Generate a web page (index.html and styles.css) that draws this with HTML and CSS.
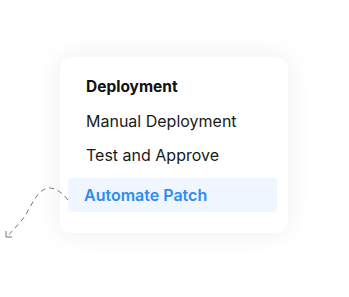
FILE: index.html
```html
<!DOCTYPE html>
<html>
<head>
<meta charset="UTF-8">
<title>Deployment</title>
<link rel="stylesheet" href="styles.css">
</head>
<body>
<div class="stage">
    <svg class="trail" width="80" height="70" viewBox="0 0 80 70">
        <path d="M68 30 C 60 20, 52 16, 45 19 C 35 23, 30 40, 22 50 C 17 56, 12 61, 7 67" fill="none" stroke="#777" stroke-width="1" stroke-dasharray="5 4"/>
        <path d="M6 61 L6 67 L12 67" fill="none" stroke="#777" stroke-width="1"/>
    </svg>
    <div class="menu-card">
        <div class="menu-title">Deployment</div>
        <div class="menu-item">Manual Deployment</div>
        <div class="menu-item">Test and Approve</div>
        <div class="menu-item active">Automate Patch</div>
    </div>
</div>
</body>
</html>
```

FILE: styles.css
```css
body {
    margin: 0;
    padding: 0;
    background-color: #fff;
    font-family: Inter, "Noto Sans", sans-serif;
}
.stage {
    position: relative;
    width: 349px;
    height: 297px;
    overflow: hidden;
    padding-top: 57px;
    box-sizing: border-box;
}
.trail {
    position: absolute;
    left: 0;
    top: 170px;
}
.menu-card {
    margin-left: 60px;
    width: 228px;
    height: 176px;
    box-sizing: border-box;
    background-color: #fff;
    border-radius: 12px;
    box-shadow: 0px 0px 28px rgba(0, 0, 0, 0.07);
    padding: 13px 11px 0 8px;
}
.menu-title {
    font-size: 15.5px;
    font-weight: 700;
    color: #111;
    padding-left: 18px;
    height: 34px;
    line-height: 34px;
}
.menu-item {
    font-size: 16px;
    color: #1a1a1a;
    padding-left: 18px;
    height: 34px;
    line-height: 34px;
}
.menu-item.active {
    margin-top: 6px;
    height: 34px;
    padding-left: 16px;
    background-color: #eff6ff;
    border-radius: 4px;
    color: #2d8cf0;
    font-weight: 600;
    font-size: 16px;
}
```
